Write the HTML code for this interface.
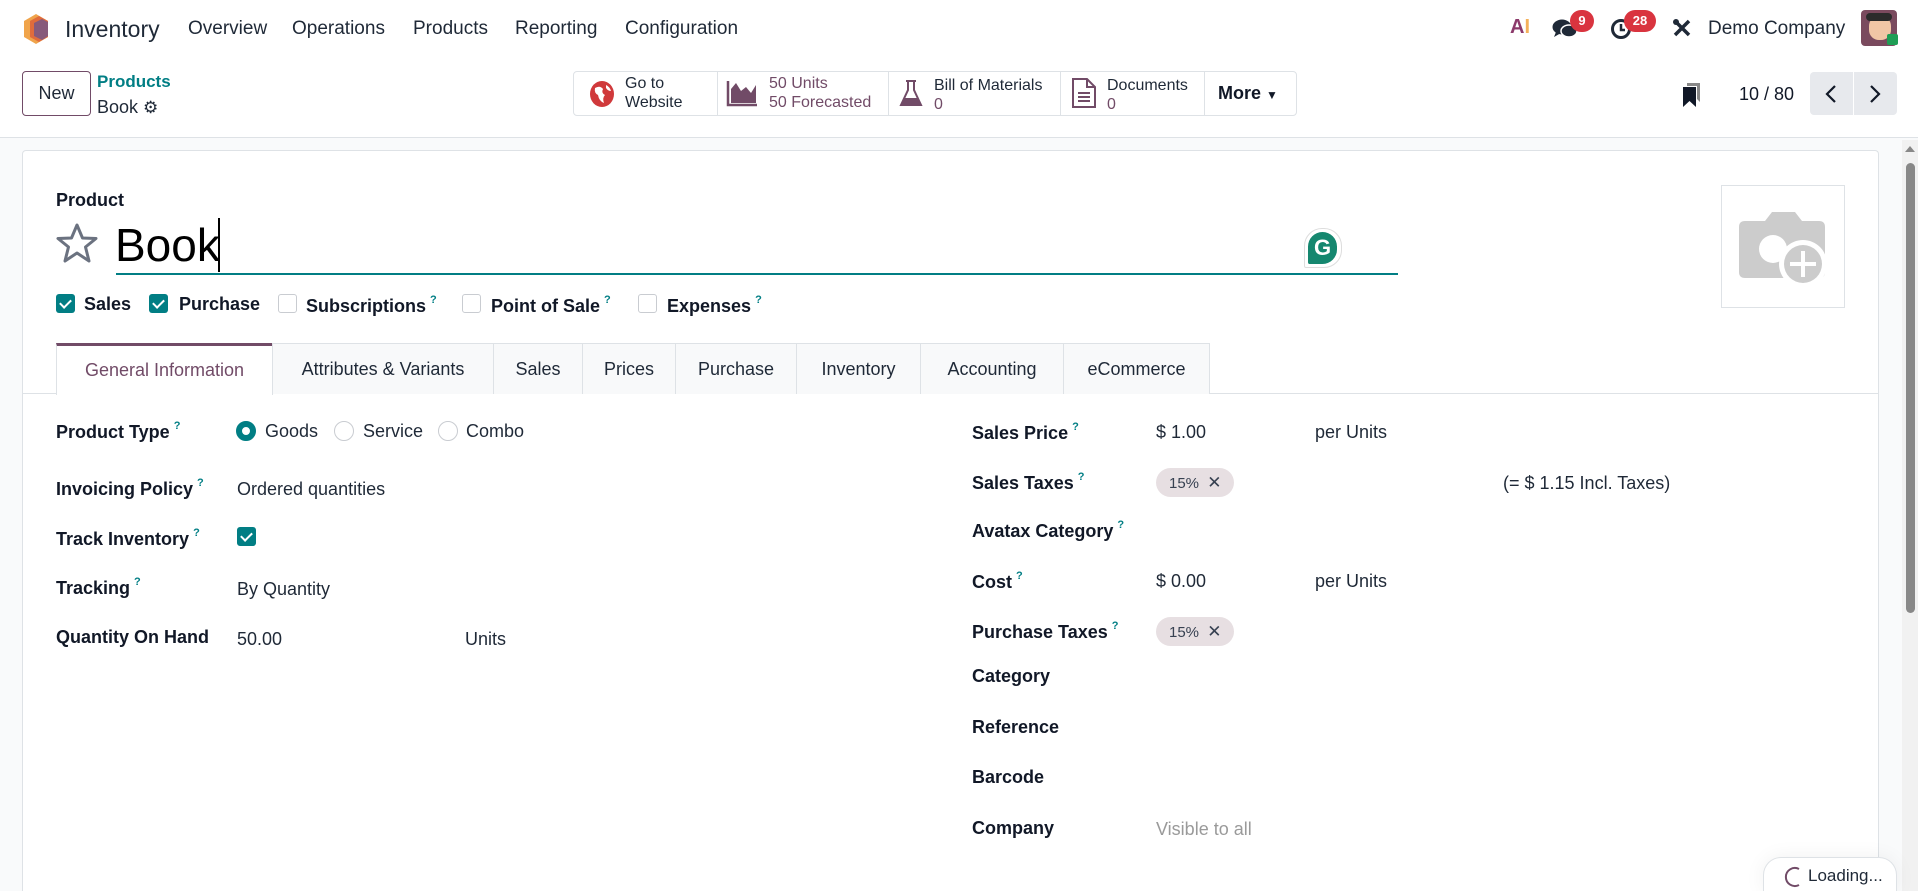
<!DOCTYPE html>
<html style="width:1918px;height:891px;overflow:hidden"><head><meta charset="utf-8"><style>
*{box-sizing:border-box;margin:0;padding:0}
body{width:1918px;height:891px;overflow:hidden;background:#f9fafb;font-family:"Liberation Sans",sans-serif;color:#1f2937;position:relative}
.a{position:absolute;white-space:nowrap}
.nav{position:absolute;left:0;top:0;width:1918px;height:56px;background:#fff}
.menu{font-size:19px;color:#1f2937;top:18px}
.cp{position:absolute;left:0;top:56px;width:1918px;height:82px;background:#fff;border-bottom:1px solid #dee2e6}
.bb{position:absolute;top:71px;height:45px;border:1px solid #dee2e6;background:#fff}
.bt{font-size:16px;line-height:19px;color:#1f2937}
.sheet{position:absolute;left:22px;top:150px;width:1857px;height:741px;background:#fff;border:1px solid #dee2e6;border-bottom:none;border-radius:4px 4px 0 0}
.lbl{font-size:18px;font-weight:bold;color:#111827}
.val{font-size:18px;color:#1f2937}
sup{color:#017e84;font-size:11px;font-weight:bold;margin-left:4px;vertical-align:9px}
.cb{position:absolute;width:19px;height:19px;border-radius:3px}
.cb.on{background:#017e84}
.cb.off{border:1px solid #c9ccd1;background:#fff}
.cb.on:after{content:"";position:absolute;left:6px;top:3px;width:5px;height:9px;border:solid #fff;border-width:0 2.5px 2.5px 0;transform:rotate(45deg)}
.tab{position:absolute;top:343px;height:51px;border:1px solid #dee2e6;border-bottom:none;background:#f8f9fa;font-size:18px;color:#1f2937;text-align:center;line-height:50px}
.rad{position:absolute;width:20px;height:20px;border-radius:50%;border:1px solid #c9ccd1;background:#fff}
.tag{position:absolute;width:78px;height:29px;border-radius:15px;background:#e7dfe2;font-size:15px;color:#374151;padding-left:13px;line-height:30px}
</style></head><body>
<div class="nav"></div>
<svg class="a" style="left:22px;top:13px" width="28" height="32" viewBox="0 0 28 32"><polygon points="14,1 26,8 26,24 14,31 2,24 2,8" fill="#f0a44b"/><polygon points="17,3 26,8 26,24 17,29 8,24 8,8" fill="#e06c3c"/><polygon points="20,6 26,9 26,23 20,27 12,23 12,10" fill="#875a7b"/></svg>
<div class="a" style="left:65px;top:16px;font-size:23px;color:#1f2937">Inventory</div>
<div class="a menu" style="left:188px">Overview</div>
<div class="a menu" style="left:292px">Operations</div>
<div class="a menu" style="left:413px">Products</div>
<div class="a menu" style="left:515px">Reporting</div>
<div class="a menu" style="left:625px">Configuration</div>
<div class="a" style="left:1510px;top:16px;font-size:20px;font-weight:bold;color:#8c3a6b">A<span style="color:#f4b15a">I</span></div>
<svg class="a" style="left:1552px;top:18px" width="26" height="22" viewBox="0 0 26 22"><ellipse cx="10" cy="9" rx="9.5" ry="7.5" fill="#1f2937"/><path d="M4 14 L2 19 L9 15Z" fill="#1f2937"/><ellipse cx="17" cy="13" rx="8" ry="6" fill="#1f2937" stroke="#fff" stroke-width="1.5"/></svg>
<div class="a" style="left:1570px;top:10px;width:24px;height:22px;border-radius:11px;background:#d9343f;color:#fff;font-size:13px;font-weight:bold;text-align:center;line-height:22px">9</div>
<svg class="a" style="left:1610px;top:17px" width="24" height="24" viewBox="0 0 24 24"><circle cx="11" cy="12" r="8.5" fill="none" stroke="#1f2937" stroke-width="3"/><path d="M11 7v6h4" stroke="#1f2937" stroke-width="2.5" fill="none"/></svg>
<div class="a" style="left:1624px;top:10px;width:32px;height:22px;border-radius:11px;background:#d9343f;color:#fff;font-size:13px;font-weight:bold;text-align:center;line-height:22px">28</div>
<svg class="a" style="left:1672px;top:18px" width="20" height="20" viewBox="0 0 20 20"><path d="M3 3 L17 17 M17 3 L3 17" stroke="#1f2937" stroke-width="3.5"/><circle cx="4" cy="4" r="3" fill="#1f2937"/></svg>
<div class="a" style="left:1708px;top:18px;font-size:19px;color:#1f2937">Demo Company</div>
<div class="a" style="left:1861px;top:10px;width:36px;height:36px;border-radius:4px;background:#7a4a5e"><div style="position:absolute;left:8px;top:6px;width:22px;height:24px;border-radius:10px;background:#f1c6a5"></div><div style="position:absolute;left:5px;top:3px;width:26px;height:8px;background:#2b2b2b;border-radius:4px"></div><div style="position:absolute;left:26px;top:24px;width:11px;height:11px;background:#1f9d55;border-radius:2px"></div></div>

<div class="cp"></div>
<div class="a" style="left:22px;top:71px;width:69px;height:45px;border:1px solid #714b67;border-radius:4px;font-size:18px;text-align:center;line-height:43px;color:#1f2937">New</div>
<div class="a" style="left:97px;top:72px;font-size:17px;font-weight:bold;color:#017e84">Products</div>
<div class="a" style="left:97px;top:97px;font-size:18px;color:#1f2937">Book <span style="font-size:17px">⚙</span></div>

<div class="bb" style="left:573px;width:724px;border-radius:4px"></div>
<div class="a" style="left:717px;top:71px;width:1px;height:45px;background:#dee2e6"></div>
<div class="a" style="left:888px;top:71px;width:1px;height:45px;background:#dee2e6"></div>
<div class="a" style="left:1060px;top:71px;width:1px;height:45px;background:#dee2e6"></div>
<div class="a" style="left:1204px;top:71px;width:1px;height:45px;background:#dee2e6"></div>
<svg class="a" style="left:589px;top:80px" width="26" height="28" viewBox="0 0 26 28"><ellipse cx="13" cy="14" rx="12" ry="13" fill="#d0393b"/><path d="M6 8 q5 -3 8 1 q-2 4 2 6 q-3 3 -1 8 q-5-2-6-8 q-4-2-3-7z M17 5 q4 2 5 6 q-3 0-5-3z" fill="#fff"/></svg>
<div class="a bt" style="left:625px;top:74px">Go to<br>Website</div>
<svg class="a" style="left:726px;top:79px" width="32" height="28" viewBox="0 0 32 28"><path d="M2 2 V26 H31" stroke="#714b67" stroke-width="2.5" fill="none"/><path d="M5 24 V10 L10 4 L15 12 L20 8 L25 14 L30 6 V24Z" fill="#714b67"/></svg>
<div class="a bt" style="left:769px;top:74px;color:#714b67">50 Units<br>50 Forecasted</div>
<svg class="a" style="left:898px;top:79px" width="26" height="28" viewBox="0 0 26 28"><path d="M8 2 H18 M10 2 V11 L3 26 H23 L16 11 V2" stroke="#714b67" stroke-width="2" fill="none"/><path d="M6 19 H20 L23 26 H3Z" fill="#714b67"/></svg>
<div class="a bt" style="left:934px;top:76px">Bill of Materials<br><span style="color:#714b67">0</span></div>
<svg class="a" style="left:1071px;top:78px" width="26" height="30" viewBox="0 0 26 30"><path d="M2 1 H16 L24 9 V29 H2Z M16 1 V9 H24" stroke="#714b67" stroke-width="2" fill="none"/><path d="M7 15 H19 M7 19 H19 M7 23 H19" stroke="#714b67" stroke-width="2"/></svg>
<div class="a bt" style="left:1107px;top:76px">Documents<br><span style="color:#714b67">0</span></div>
<div class="a" style="left:1218px;top:83px;font-size:18px;font-weight:bold;color:#111827">More <span style="font-size:12px">▼</span></div>

<svg class="a" style="left:1682px;top:82px" width="20" height="26" viewBox="0 0 20 26"><path d="M5 1 H18 V20 L15 17 V4 H5Z" fill="#888"/><path d="M1 5 H14 V25 L7.5 19 L1 25Z" fill="#111827"/></svg>
<div class="a" style="left:1739px;top:84px;font-size:18px;color:#111827">10 / 80</div>
<div class="a" style="left:1810px;top:72px;width:43px;height:43px;background:#e7e9ed;border-radius:4px 0 0 4px"></div>
<div class="a" style="left:1854px;top:72px;width:43px;height:43px;background:#e7e9ed;border-radius:0 4px 4px 0"></div>
<svg class="a" style="left:1824px;top:84px" width="14" height="20" viewBox="0 0 14 20"><path d="M11 2 L3 10 L11 18" stroke="#111827" stroke-width="2.2" fill="none"/></svg>
<svg class="a" style="left:1868px;top:84px" width="14" height="20" viewBox="0 0 14 20"><path d="M3 2 L11 10 L3 18" stroke="#111827" stroke-width="2.2" fill="none"/></svg>

<div class="sheet"></div>
<div class="a" style="left:1902px;top:140px;width:16px;height:751px;background:#f1f1f1"></div>
<div class="a" style="left:1905px;top:146px;width:0;height:0;border-left:5px solid transparent;border-right:5px solid transparent;border-bottom:6px solid #888"></div>
<div class="a" style="left:1906px;top:163px;width:9px;height:450px;background:#888;border-radius:5px"></div>

<div class="a lbl" style="left:56px;top:190px">Product</div>
<svg class="a" style="left:55px;top:222px" width="44" height="42" viewBox="0 0 44 42"><polygon points="22,3 27.5,16 41,16.5 30.5,25 34,39 22,31 10,39 13.5,25 3,16.5 16.5,16" fill="none" stroke="#6b7280" stroke-width="3" stroke-linejoin="round"/></svg>
<div class="a" style="left:115px;top:218px;font-size:46px;color:#000">Book</div>
<div class="a" style="left:218px;top:218px;width:2px;height:54px;background:#000"></div>
<div class="a" style="left:116px;top:273px;width:1282px;height:2px;background:#017e84"></div>
<div class="a" style="left:1304px;top:228px;width:38px;height:40px;border:1px solid #ddd;border-radius:18px 18px 18px 2px;background:#fff"></div>
<div class="a" style="left:1308px;top:232px;width:29px;height:32px;border-radius:15px 15px 15px 2px;background:#15876f;color:#fff;font-weight:bold;font-size:22px;text-align:center;line-height:32px">G</div>
<div class="a" style="left:1721px;top:185px;width:124px;height:123px;border:1px solid #dee2e6"></div>
<svg class="a" style="left:1735px;top:205px" width="100" height="90" viewBox="0 0 100 90"><path d="M10 16 H30 L37 7 H60 L67 16 H84 Q90 16 90 22 V67 Q90 73 84 73 H10 Q4 73 4 67 V22 Q4 16 10 16Z" fill="#ccc"/><circle cx="38" cy="44" r="14" fill="#fff"/><circle cx="68" cy="59" r="24" fill="#fff"/><circle cx="68" cy="59" r="19" fill="#ccc"/><path d="M68 46 V72 M55 59 H81" stroke="#fff" stroke-width="4"/></svg>

<div class="cb on" style="left:56px;top:294px"></div><div class="a lbl" style="left:84px;top:294px;font-size:18px">Sales</div>
<div class="cb on" style="left:149px;top:294px"></div><div class="a lbl" style="left:179px;top:294px">Purchase</div>
<div class="cb off" style="left:278px;top:294px"></div><div class="a lbl" style="left:306px;top:294px">Subscriptions<sup>?</sup></div>
<div class="cb off" style="left:462px;top:294px"></div><div class="a lbl" style="left:491px;top:294px">Point of Sale<sup>?</sup></div>
<div class="cb off" style="left:638px;top:294px"></div><div class="a lbl" style="left:667px;top:294px">Expenses<sup>?</sup></div>

<div class="a" style="left:23px;top:393px;width:1855px;height:1px;background:#dee2e6"></div>
<div class="tab" style="left:56px;width:217px;background:#fff;border-top:3px solid #714b67;color:#714b67;height:52px;line-height:48px">General Information</div>
<div class="tab" style="left:272px;width:222px">Attributes &amp; Variants</div>
<div class="tab" style="left:493px;width:90px">Sales</div>
<div class="tab" style="left:582px;width:94px">Prices</div>
<div class="tab" style="left:675px;width:122px">Purchase</div>
<div class="tab" style="left:796px;width:125px">Inventory</div>
<div class="tab" style="left:920px;width:144px">Accounting</div>
<div class="tab" style="left:1063px;width:147px">eCommerce</div>

<div class="a lbl" style="left:56px;top:420px">Product Type<sup>?</sup></div>
<div class="rad" style="left:236px;top:421px;border:6px solid #017e84"></div><div class="a val" style="left:265px;top:421px">Goods</div>
<div class="rad" style="left:334px;top:421px"></div><div class="a val" style="left:363px;top:421px">Service</div>
<div class="rad" style="left:438px;top:421px"></div><div class="a val" style="left:466px;top:421px">Combo</div>
<div class="a lbl" style="left:56px;top:477px">Invoicing Policy<sup>?</sup></div>
<div class="a val" style="left:237px;top:479px">Ordered quantities</div>
<div class="a lbl" style="left:56px;top:527px">Track Inventory<sup>?</sup></div>
<div class="cb on" style="left:237px;top:527px"></div>
<div class="a lbl" style="left:56px;top:576px">Tracking<sup>?</sup></div>
<div class="a val" style="left:237px;top:579px">By Quantity</div>
<div class="a lbl" style="left:56px;top:627px">Quantity On Hand</div>
<div class="a val" style="left:237px;top:629px">50.00</div>
<div class="a val" style="left:465px;top:629px">Units</div>

<div class="a lbl" style="left:972px;top:421px">Sales Price<sup>?</sup></div>
<div class="a val" style="left:1156px;top:422px">$ 1.00</div>
<div class="a val" style="left:1315px;top:422px">per Units</div>
<div class="a lbl" style="left:972px;top:471px">Sales Taxes<sup>?</sup></div>
<div class="tag" style="left:1156px;top:468px">15% <span style="font-size:17px;margin-left:4px">✕</span></div>
<div class="a val" style="left:1503px;top:473px">(= $ 1.15 Incl. Taxes)</div>
<div class="a lbl" style="left:972px;top:519px">Avatax Category<sup>?</sup></div>
<div class="a lbl" style="left:972px;top:570px">Cost<sup>?</sup></div>
<div class="a val" style="left:1156px;top:571px">$ 0.00</div>
<div class="a val" style="left:1315px;top:571px">per Units</div>
<div class="a lbl" style="left:972px;top:620px">Purchase Taxes<sup>?</sup></div>
<div class="tag" style="left:1156px;top:617px">15% <span style="font-size:17px;margin-left:4px">✕</span></div>
<div class="a lbl" style="left:972px;top:666px">Category</div>
<div class="a lbl" style="left:972px;top:717px">Reference</div>
<div class="a lbl" style="left:972px;top:767px">Barcode</div>
<div class="a lbl" style="left:972px;top:818px">Company</div>
<div class="a val" style="left:1156px;top:819px;color:#9a9a9a">Visible to all</div>

<div class="a" style="left:1763px;top:857px;width:134px;height:34px;border:1px solid #dee2e6;border-bottom:none;border-radius:18px 18px 0 0;background:#fff;box-shadow:0 0 20px rgba(0,0,0,.06)"></div>
<svg class="a" style="left:1784px;top:866px" width="18" height="22" viewBox="0 0 18 22"><path d="M15 3 A9 9 0 1 0 15 19" stroke="#714b67" stroke-width="2" fill="none"/></svg>
<div class="a" style="left:1808px;top:866px;font-size:17px;color:#1f2937">Loading...</div>
</body></html>
